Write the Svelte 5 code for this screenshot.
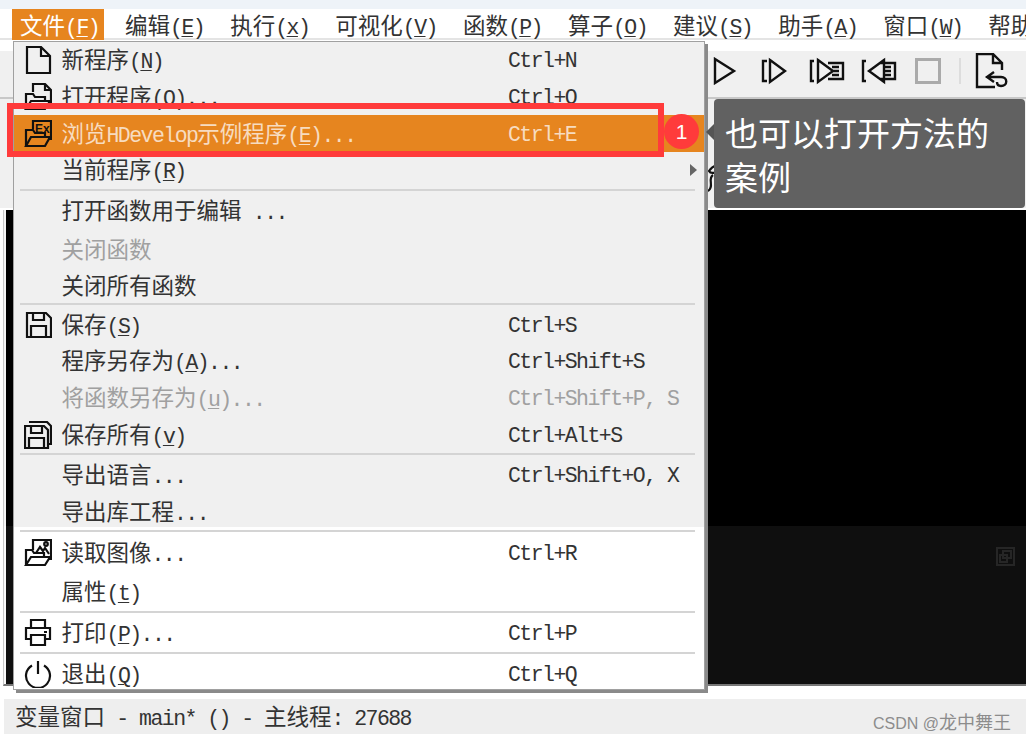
<script lang="ts">
    type Row = {
        label?: string;
        key?: string;
        icon?: string;
        off?: boolean;
        hot?: boolean;
        sub?: boolean;
        tall?: boolean;
        sep?: boolean;
    };

    const menus = ["文件(_F)", "编辑(_E)", "执行(_x)", "可视化(_V)", "函数(_P)", "算子(_O)", "建议(_S)", "助手(_A)", "窗口(_W)", "帮助"];

    const rows: Row[] = [
        { label: "新程序(_N)", key: "Ctrl+N", icon: "new" },
        { label: "打开程序(_O)...", key: "Ctrl+O", icon: "open" },
        { label: "浏览HDevelop示例程序(_E)...", key: "Ctrl+E", icon: "example", hot: true },
        { label: "当前程序(_R)", sub: true },
        { sep: true },
        { label: "打开函数用于编辑 ..." },
        { label: "关闭函数", off: true },
        { label: "关闭所有函数" },
        { sep: true },
        { label: "保存(_S)", key: "Ctrl+S", icon: "save" },
        { label: "程序另存为(_A)...", key: "Ctrl+Shift+S" },
        { label: "将函数另存为(_u)...", key: "Ctrl+Shift+P, S", off: true },
        { label: "保存所有(_v)", key: "Ctrl+Alt+S", icon: "saveall" },
        { sep: true },
        { label: "导出语言...", key: "Ctrl+Shift+O, X" },
        { label: "导出库工程..." },
        { sep: true },
        { label: "读取图像...", key: "Ctrl+R", icon: "image", tall: true },
        { label: "属性(_t)", tall: true },
        { sep: true },
        { label: "打印(_P)...", key: "Ctrl+P", icon: "print" },
        { sep: true },
        { label: "退出(_Q)", key: "Ctrl+Q", icon: "quit" },
    ];

    // split a label into latin / cjk runs, "_x" marks the underlined mnemonic
    function runs(text: string) {
        const out: { t: string; cls: string }[] = [];
        for (const m of text.matchAll(/_(.)|([^_\u2E80-\uFFFF]+)|([\u2E80-\uFFFF]+)/g)) {
            if (m[1]) out.push({ t: m[1], cls: "lat mn" });
            else if (m[2]) out.push({ t: m[2], cls: "lat" });
            else out.push({ t: m[3], cls: "cjk" });
        }
        return out;
    }
</script>

{#snippet txt(s)}{#each runs(s) as r}<span class={r.cls}>{r.t}</span>{/each}{/snippet}

{#snippet icon(name)}
    <svg class="mi" width="28" height="28" viewBox="0 0 28 28">
        {#if name === "new"}
            <path d="M3 1H17L26 10V27H3ZM17 1V10H26" />
        {:else if name === "open"}
            <path d="M9 9V1H21L27 7V19H24M21 1V7H27" />
            <path d="M2 26V11H9L11 14H21V18M2 26L7 18H26L21 26Z" />
        {:else if name === "example"}
            <path d="M9 9V1H27V19H24" />
            <path d="M2 26V10H9L11 13H21V17" />
            <path d="M2 26L7 17H26L21 26Z" />
            <text x="11" y="12.5" class="ex">Ex</text>
        {:else if name === "save"}
            <path d="M1 1H20L25 6V25H1ZM7 1V8H18V1M5 25V14H20V25" transform="translate(2 1)" />
        {:else if name === "saveall"}
            <path d="M1 5H20L24 9V27H1ZM7 5V12H18V5M5 27V17H20V27" />
            <path d="M5 1H23L27 5V23H24" />
        {:else if name === "image"}
            <path d="M9 11V1H27V20H24" />
            <path d="M2 26V11H8L10 14H20V18M2 26L7 18H26L21 26Z" />
            <path d="M12 14L16 8L19 12L21 9L25 15" />
            <circle cx="22" cy="5" r="1.8" />
        {:else if name === "print"}
            <path d="M7 9V1H21V9M7 20H2V9H26V20H21M7 16H21V26H7ZM20 13H23" />
        {:else if name === "quit"}
            <path d="M8 5.5A12 12 0 1 0 20 5.5M14 1V14" />
        {/if}
    </svg>
{/snippet}

<div class="page">
    <div class="strip"></div>
    <nav class="menubar">
        {#each menus as m, i}
            <span class="top" class:active={i === 0}>{@render txt(m)}</span>
        {/each}
    </nav>
    <div class="gapwhite"></div>
    <div class="toolbar">
        <svg class="t-play" width="24" height="28" viewBox="0 0 24 28"><path d="M2 2L21 14L2 26Z" /></svg>
        <svg class="t-step" width="26" height="28" viewBox="0 0 26 28"><path d="M6 4H2V24H6M9 3L24 14L9 25Z" /></svg>
        <svg class="t-run" width="36" height="28" viewBox="0 0 36 28"><path d="M5 4H2V24H5M9 3L24 14L9 25ZM19 6H34V22H19M23 10H30M23 14H30M23 18H30" /></svg>
        <svg class="t-back" width="36" height="28" viewBox="0 0 36 28"><path d="M5 4H2V24H5M23 3L8 14L23 25ZM19 6H34V22H19M23 10H30M23 14H30M23 18H30" /></svg>
        <span class="t-stop"></span>
        <span class="t-div"></span>
        <svg class="t-doc" width="34" height="36" viewBox="0 0 34 36"><path d="M20 34H2V1H18L27 10V17M18 1V10H27M19 19L12 24L19 29M12 24H26C33 24 33 33 26 33C23 33 22 31 22 29" /></svg>
    </div>
    <div class="pane">
        <svg width="20" height="30" viewBox="0 0 20 30"><path d="M3 28C10 24 2 16 8 12M4 8C8 2 16 0 16 4C16 9 6 12 4 8Z" /></svg>
    </div>
    <div class="canvas"></div>
    <div class="canvas low">
        <svg width="19" height="19" viewBox="0 0 19 19"><path d="M1 1H18V18H1ZM7 4H15V11H7ZM4 8H11V15H4Z" /></svg>
    </div>
    <div class="gapwhite foot"></div>
    <footer class="status">
        <span>{@render txt("变量窗口 - main* () - 主线程: 27688")}</span>
        <span class="wm">CSDN @<span class="wm-cjk">龙中舞王</span></span>
    </footer>

    <div class="menu">
        {#each rows as r}
            {#if r.sep}
                <div class="sep"></div>
            {:else}
                <div class="row" class:off={r.off} class:hot={r.hot} class:tall={r.tall}>
                    <span class="ic">{#if r.icon}{@render icon(r.icon)}{/if}</span>
                    <span class="lb">{@render txt(r.label)}</span>
                    <span class="ky">{#if r.key}{@render txt(r.key)}{/if}</span>
                    {#if r.sub}<span class="arrow"></span>{/if}
                </div>
            {/if}
        {/each}
    </div>

    <div class="redbox"></div>
    <div class="badge">1</div>
    <div class="tip-arrow"></div>
    <div class="tip">也可以打开方法的<br />案例</div>
</div>

<style>
    :global(body) {
        background: #fff;
    }
    .page {
        position: relative;
        display: flex;
        flex-direction: column;
        width: 1026px;
        height: 740px;
        overflow: hidden;
        background: #fff;
        color: #333;
    }
    /* latin is squeezed to half of the cjk width, as in the bitmap font of the app */
    .lat {
        font: 21.5px/30px "Liberation Mono", monospace;
        letter-spacing: -1.55px;
        white-space: pre;
    }
    .cjk {
        font: 22.5px/30px "Noto Sans CJK SC", sans-serif;
    }
    .mn {
        text-decoration: underline;
        text-decoration-thickness: 1px;
        text-underline-offset: 2px;
    }
    .strip {
        height: 9px;
        background: #eef3f8;
    }
    .menubar {
        display: flex;
        align-items: flex-start;
        gap: 13px;
        height: 29px;
        padding-left: 12px;
        border-bottom: 2px solid #e4e4e4;
        white-space: nowrap;
    }
    .top {
        padding: 0 5px 0 8px;
        height: 31px;
        line-height: 27px;
    }
    .top.active {
        background: #e6851f;
        color: #fff;
    }
    .gapwhite {
        height: 11px;
    }
    .toolbar {
        display: flex;
        align-items: center;
        height: 48px;
        padding: 0 0 6px 713px;
        box-sizing: border-box;
        background: #f0f0f0;
        border-bottom: 2px solid #c8c8c8;
    }
    .toolbar svg path {
        fill: none;
        stroke: #111;
        stroke-width: 2.4;
    }
    .t-step {
        margin-left: 24px;
    }
    .t-run {
        margin-left: 22px;
    }
    .t-back {
        margin-left: 16px;
    }
    .t-stop {
        width: 26px;
        height: 26px;
        margin-left: 18px;
        box-sizing: border-box;
        border: 3px solid #aaa;
    }
    .t-div {
        width: 2px;
        height: 26px;
        margin-left: 18px;
        background: #ddd;
    }
    .t-doc {
        margin-left: 14px;
    }
    .pane {
        display: flex;
        align-items: flex-end;
        height: 109px;
        margin-bottom: 2px;
        padding: 0 0 15px 705px;
        box-sizing: border-box;
        background: #f0f0f0;
    }
    .pane path {
        fill: none;
        stroke: #111;
        stroke-width: 2.2;
    }
    .canvas {
        height: 316px;
        margin-left: 3px;
        border-left: 1px solid #c8c8c8;
        background: linear-gradient(90deg, #f5f5f5 0 2px, #000 2px);
    }
    .canvas.low {
        display: flex;
        justify-content: flex-end;
        align-items: flex-start;
        height: 160px;
        padding: 21px 11px 0 0;
        box-sizing: border-box;
        background: linear-gradient(90deg, #fafafa 0 2px, #0f0f0f 2px);
        border-bottom: 2px solid #777;
    }
    .low path {
        fill: none;
        stroke: #262626;
        stroke-width: 2;
    }
    .foot {
        height: 13px;
    }
    .status {
        display: flex;
        justify-content: space-between;
        align-items: center;
        height: 35px;
        margin-left: 4px;
        padding: 0 15px 0 11px;
        background: #eee;
        color: #333;
    }
    .wm {
        margin-top: 12px;
        color: #8c8c8c;
        font: 16px/22px "Liberation Sans", sans-serif;
    }
    .wm-cjk {
        font: 18px/22px "Noto Sans CJK SC", sans-serif;
    }
    .menu {
        position: absolute;
        left: 13px;
        top: 41px;
        width: 692px;
        height: 649px;
        box-sizing: border-box;
        overflow: hidden;
        background: linear-gradient(#f0f0f0 0 485px, #fff 485px);
        border: 1px solid #a0a0a0;
        box-shadow: 3px 3px 0 #8a8a8a;
    }
    .row {
        position: relative;
        display: grid;
        grid-template-columns: 47.5px 446.5px 1fr;
        align-items: center;
        height: 36.7px;
        white-space: nowrap;
    }
    .row.tall {
        height: 38.6px;
    }
    .row.off {
        color: #a0a0a0;
    }
    .row.hot {
        background: #e6851f;
        color: #f7dcc0;
    }
    .ky {
        padding-top: 2px;
    }
    .ic {
        display: flex;
        padding-left: 10px;
    }
    .mi {
        flex: none;
        fill: none;
        stroke: #111;
        stroke-width: 2.2;
    }
    .ex {
        font: bold 12px "Liberation Sans", sans-serif;
        fill: #111;
        stroke: none;
    }
    .arrow {
        position: absolute;
        right: 7px;
        top: 12px;
        border-left: 7px solid #666;
        border-top: 6px solid transparent;
        border-bottom: 6px solid transparent;
    }
    .sep {
        height: 2px;
        margin: 0 9px 1.8px 6px;
        background: #d4d4d4;
    }
    .redbox {
        position: absolute;
        left: 7px;
        top: 103px;
        width: 657px;
        height: 54px;
        box-sizing: border-box;
        border: 6px solid #ff3b3b;
    }
    .badge {
        position: absolute;
        left: 664px;
        top: 114px;
        width: 35px;
        height: 35px;
        border-radius: 50%;
        background: #ff3b3b;
        color: #fff;
        font: 21px/35px "Liberation Sans", sans-serif;
        text-align: center;
    }
    .tip-arrow {
        position: absolute;
        left: 706px;
        top: 123px;
        border-right: 9px solid #555;
        border-top: 9px solid transparent;
        border-bottom: 9px solid transparent;
    }
    .tip {
        position: absolute;
        left: 714px;
        top: 99px;
        width: 311px;
        height: 109px;
        box-sizing: border-box;
        padding: 11px 0 0 11px;
        border-radius: 4px;
        background: #616161;
        color: #fff;
        font: 33px/44px "Noto Sans CJK SC", sans-serif;
    }
</style>
